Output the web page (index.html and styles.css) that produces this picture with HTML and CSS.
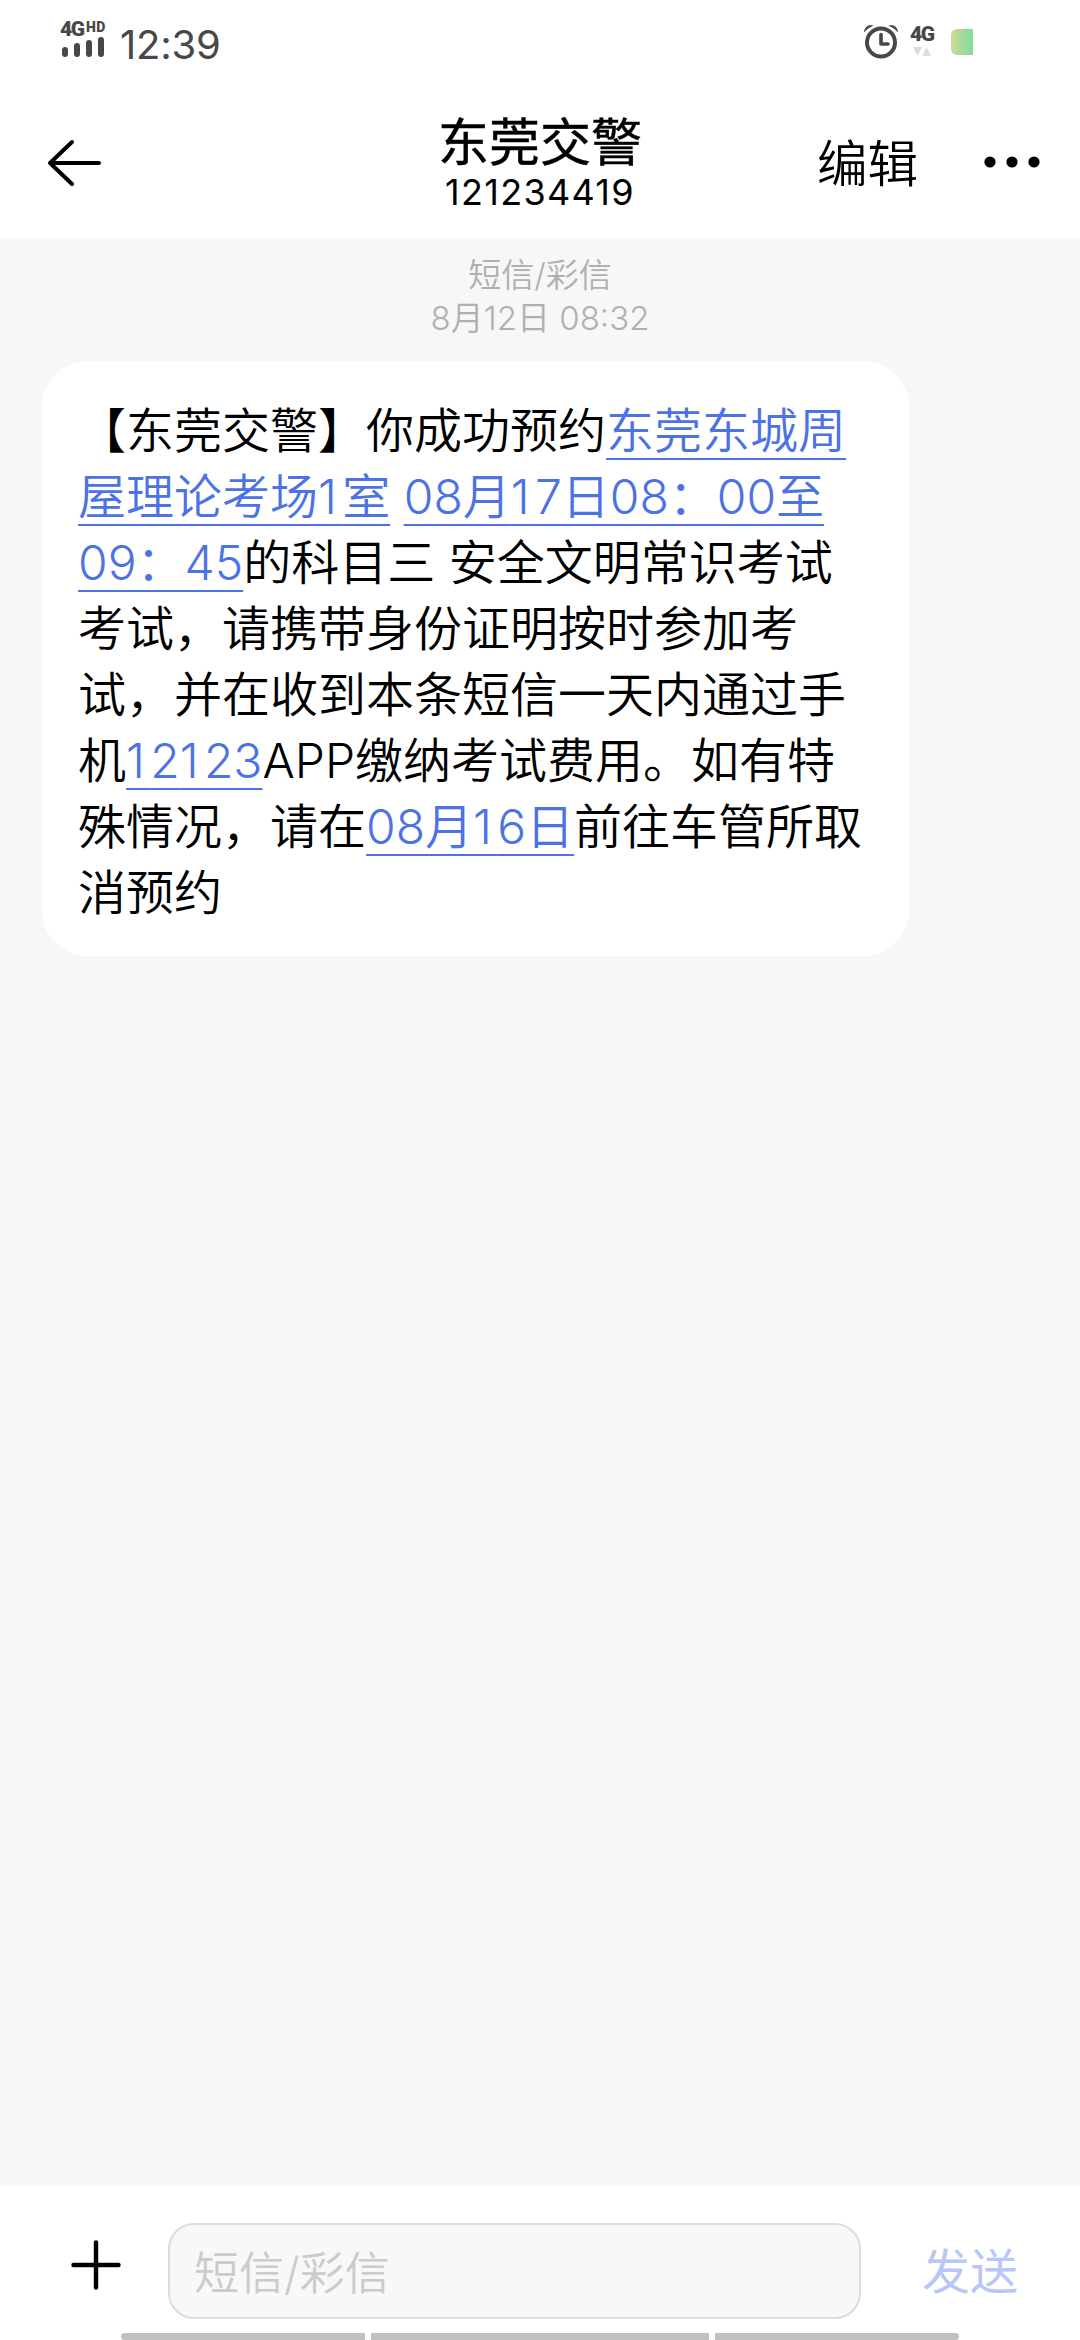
FILE: index.html
```html
<!DOCTYPE html>
<html lang="zh-CN">
<head>
<meta charset="utf-8">
<title>东莞交警</title>
<link rel="stylesheet" href="styles.css">
</head>
<body>
<div class="screen">
  <div class="status">
    <div class="signal">
      <div class="network"><span class="gen">4G</span><span class="hd">HD</span></div>
      <div class="bars"><i class="bar b1"></i><i class="bar b2"></i><i class="bar b3"></i><i class="bar b4"></i></div>
    </div>
    <div class="clock">12:39</div>
    <div class="status-right">
      <svg class="alarm" width="36" height="36" viewBox="0 0 36 36" fill="none" stroke="#484848">
        <circle cx="18" cy="19.500" r="14" stroke-width="4"/>
        <path d="M18 11.500v9.500h7" stroke-width="3.600" stroke-linecap="round" stroke-linejoin="round"/>
        <path d="M1 9.500C1 4 6 .5 10.500 2.500Q5 5 1 9.500ZM35 9.500C35 4 30 .5 25.500 2.500Q31 5 35 9.500Z" fill="#484848" stroke="none"/>
      </svg>
      <div class="data">
        <span class="gen">4G</span>
        <svg width="18" height="9" viewBox="0 0 18 9" fill="#dcdcdc"><path d="M0 0h9L4.500 9ZM9 9h9L13.500 0Z"/></svg>
      </div>
      <div class="battery"></div>
    </div>
  </div>

  <header class="header">
    <svg class="back" width="56" height="50" viewBox="0 0 56 50" fill="none" stroke="#000" stroke-width="4" stroke-linecap="round" stroke-linejoin="round"><path d="M52 25H3M25 4L3 25L25 46"/></svg>
    <div class="contact">
      <div class="name">东莞交警</div>
      <div class="number">121234419</div>
    </div>
    <div class="actions">
      <span class="edit">编辑</span>
      <svg class="more" width="56" height="12" viewBox="0 0 56 12"><circle cx="6" cy="6" r="5.600"/><circle cx="28" cy="6" r="5.600"/><circle cx="50" cy="6" r="5.600"/></svg>
    </div>
  </header>

  <main class="thread">
    <div class="meta"><div>短信/彩信</div><div>8月12日 08:32</div></div>
    <div class="bubble">
      <div class="line">【东莞交警】你成功预约<a>东莞东城周</a></div>
      <div class="line"><a>屋理论考场<span class="one">1</span>室</a> <a>08月<span class="one">1</span>7日08：00至</a></div>
      <div class="line"><a>09：45</a>的科目三 安全文明常识考试</div>
      <div class="line">考试，请携带身份证明按时参加考</div>
      <div class="line">试，并在收到本条短信一天内通过手</div>
      <div class="line">机<a><span class="one">1</span>2<span class="one">1</span>23</a>APP缴纳考试费用。如有特</div>
      <div class="line">殊情况，请在<a>08月<span class="one">1</span>6日</a>前往车管所取</div>
      <div class="line">消预约</div>
    </div>
  </main>

  <footer class="composer">
    <div class="compose-row">
      <svg class="plus" width="50" height="50" viewBox="0 0 50 50" stroke="#000" stroke-width="4.400" stroke-linecap="round"><path d="M25 2.500v45M2.500 25h45"/></svg>
      <div class="input">短信/彩信</div>
      <div class="send">发送</div>
    </div>
    <div class="nav"><i></i><i class="mid"></i><i></i></div>
  </footer>
</div>
</body>
</html>
```
FILE: styles.css
```css
* { box-sizing: border-box; }
body {
  margin: 0;
  font-family: Inter, "Noto Sans CJK SC", sans-serif;
  color: #000;
  background: #fff;
}
svg { display: block; flex: none; }
.screen {
  width: 1080px;
  height: 2340px;
  display: flex;
  flex-direction: column;
  overflow: hidden;
}

.status {
  height: 90px;
  flex: none;
  display: flex;
  align-items: flex-start;
  padding-left: 60px;
  color: #484848;
}
.signal { width: 60px; padding-top: 22px; }
.network { display: flex; align-items: flex-start; height: 15px; font-family: Roboto, sans-serif; font-weight: 900; }
.gen { display: block; font-family: Roboto, sans-serif; font-size: 21px; line-height: 15px; font-weight: 900; letter-spacing: -1.5px; width: 26px; }
.hd { font-size: 14px; line-height: 10px; letter-spacing: 0.5px; }
.bars { display: flex; align-items: flex-end; gap: 6px; height: 20px; padding-left: 2px; }
.bar { width: 6px; border-radius: 3px; background: #484848; }
.b1 { height: 10px; }
.b2 { height: 14px; }
.b3 { height: 17px; }
.b4 { height: 20px; }
.clock { font-size: 40px; line-height: 48px; padding-top: 21px; font-weight: 400; letter-spacing: -0.2px; }
.status-right { margin-left: auto; width: 217px; display: flex; align-items: flex-start; }
.alarm { margin-top: 23px; }
.data { margin: 27px 0 0 11px; width: 41px; }
.data svg { margin: 5px 0 0 3px; }
.battery { width: 22px; height: 26px; margin-top: 29px; border-radius: 6px 0 0 6px; background: linear-gradient(90deg, #d0d898, #8cdc9c 80%); }

.header {
  height: 148px;
  flex: none;
  display: grid;
  grid-template-columns: 400px 280px 400px;
}
.back { margin: 48px 0 0 47px; }
.contact { display: flex; flex-direction: column; align-items: center; padding-top: 23px; white-space: nowrap; }
.name { font-size: 51px; line-height: 60px; font-weight: 400; -webkit-text-stroke: 0.5px #000; }
.number { font-size: 36px; line-height: 38px; letter-spacing: 1.3px; }
.actions { display: flex; align-items: flex-start; padding: 44px 0 0 137px; }
.edit { font-size: 50.500px; line-height: 60px; width: 167px; font-weight: 350; }
.more { margin-top: 22px; }

.thread { flex: 1; background: #f7f7f7; padding: 16px 42px 0; }
.meta { text-align: center; font-size: 33px; line-height: 43px; color: #b0b0b0; font-weight: 350; height: 107px; }
.bubble {
  width: 867px;
  height: 595px;
  border-radius: 46px;
  background: #fff;
  padding: 37px 36px 0;
  font-size: 48px;
  font-weight: 350;
}
.line { height: 66px; line-height: 66px; white-space: nowrap; }
.line a {
  color: #4c72e4;
  text-decoration: underline;
  text-decoration-thickness: 2px;
  text-underline-offset: 10px;
  text-decoration-skip-ink: none;
}
.one { letter-spacing: 5.300px; }

.composer { height: 154px; flex: none; display: flex; flex-direction: column; justify-content: space-between; }
.compose-row { display: flex; align-items: flex-start; padding: 37px 0 0 71px; }
.plus { margin-top: 17px; }
.input {
  width: 693px;
  height: 96px;
  margin-left: 47px;
  border: 2px solid #dcdcdc;
  border-radius: 26px;
  background: #f8f8f8;
  padding-left: 24px;
  font-size: 45px;
  line-height: 97px;
  font-weight: 350;
  color: #cbcbcb;
}
.send { margin-left: 61px; font-size: 48px; line-height: 97px; color: #b8c6f8; }
.nav { display: flex; gap: 6px; padding-left: 121px; }
.nav i { width: 244px; height: 7px; background: #c0c0c0; }
.nav i:first-child { border-radius: 4px 0 0 4px; }
.nav i:last-child { border-radius: 0 4px 4px 0; }
.nav .mid { width: 338px; }
```
